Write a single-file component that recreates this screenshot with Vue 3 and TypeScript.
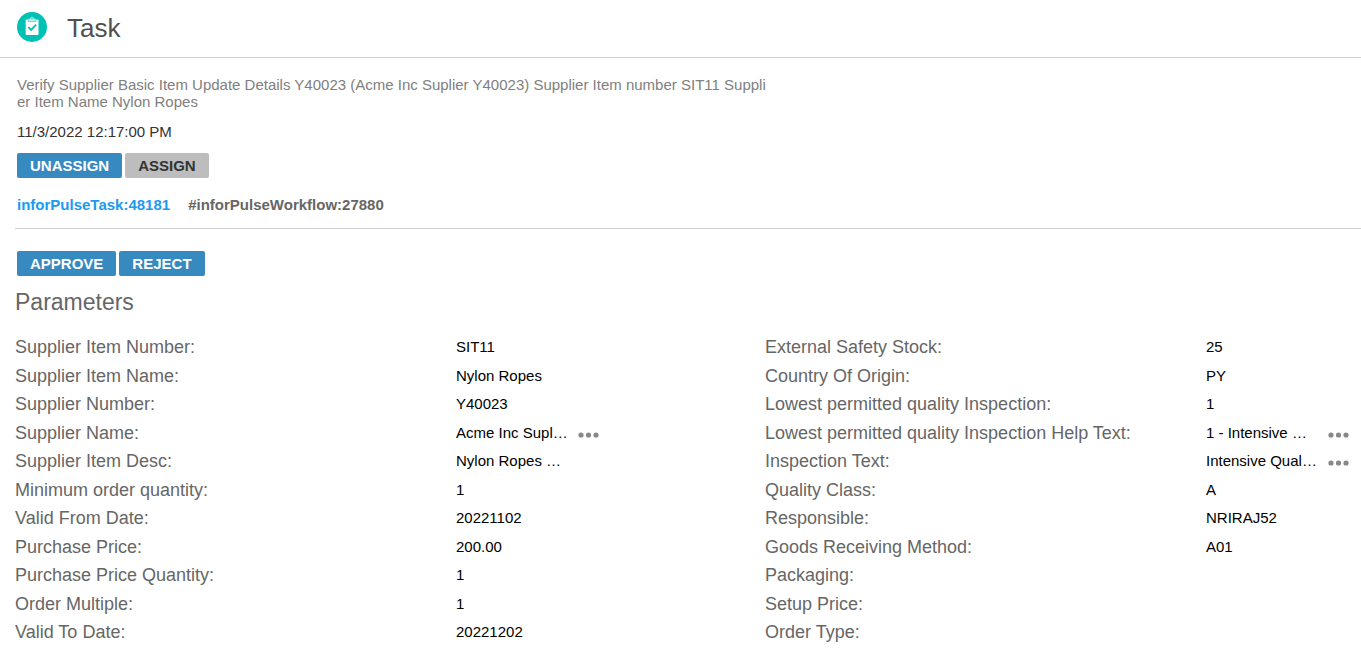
<script setup lang="ts">
interface Parameter {
  label: string
  value: string
  more?: boolean
}

const columns: Parameter[][] = [
  [
    { label: 'Supplier Item Number:', value: 'SIT11' },
    { label: 'Supplier Item Name:', value: 'Nylon Ropes' },
    { label: 'Supplier Number:', value: 'Y40023' },
    { label: 'Supplier Name:', value: 'Acme Inc Supl…', more: true },
    { label: 'Supplier Item Desc:', value: 'Nylon Ropes …' },
    { label: 'Minimum order quantity:', value: '1' },
    { label: 'Valid From Date:', value: '20221102' },
    { label: 'Purchase Price:', value: '200.00' },
    { label: 'Purchase Price Quantity:', value: '1' },
    { label: 'Order Multiple:', value: '1' },
    { label: 'Valid To Date:', value: '20221202' },
  ],
  [
    { label: 'External Safety Stock:', value: '25' },
    { label: 'Country Of Origin:', value: 'PY' },
    { label: 'Lowest permitted quality Inspection:', value: '1' },
    { label: 'Lowest permitted quality Inspection Help Text:', value: '1 - Intensive …', more: true },
    { label: 'Inspection Text:', value: 'Intensive Qual…', more: true },
    { label: 'Quality Class:', value: 'A' },
    { label: 'Responsible:', value: 'NRIRAJ52' },
    { label: 'Goods Receiving Method:', value: 'A01' },
    { label: 'Packaging:', value: '' },
    { label: 'Setup Price:', value: '' },
    { label: 'Order Type:', value: '' },
  ],
]
</script>

<template>
  <div class="page">
    <header class="header">
      <svg class="logo" viewBox="0 0 30 30" aria-hidden="true">
        <circle cx="15" cy="15" r="15" fill="#00c2b4" />
        <rect x="8.7" y="7.5" width="12.8" height="15.5" rx=".8" fill="#fff" />
        <path d="M11 9.6V7.4q0-.8.8-.8h1a2.3 2.3 0 0 1 4.5 0h1q.8 0 .8.8v2.2z" fill="#b5ece8" stroke="#00c2b4" stroke-width=".5" />
        <circle cx="15" cy="6.6" r=".7" fill="#00c2b4" />
        <path d="M11.4 15.2l2.8 2.7 4.9-5.2" fill="none" stroke="#00c2b4" stroke-width="1.8" />
      </svg>
      <h1 class="title">Task</h1>
    </header>

    <main class="content">
      <section class="summary">
        <p class="description">Verify Supplier Basic Item Update Details Y40023 (Acme Inc Suplier Y40023) Supplier Item number SIT11 Supplier Item Name Nylon Ropes</p>
        <p class="date">11/3/2022 12:17:00 PM</p>
        <div class="actions">
          <button type="button" class="button">UNASSIGN</button>
          <button type="button" class="button muted">ASSIGN</button>
        </div>
        <div class="tags">
          <a href="#task" class="task">inforPulseTask:48181</a>
          <span>#inforPulseWorkflow:27880</span>
        </div>
      </section>

      <div class="actions decisions">
        <button type="button" class="button">APPROVE</button>
        <button type="button" class="button">REJECT</button>
      </div>

      <h2 class="subtitle">Parameters</h2>
      <div class="parameters">
        <dl v-for="(items, i) in columns" :key="i" class="list">
          <div v-for="item in items" :key="item.label" class="row">
            <dt>{{ item.label }}</dt>
            <dd>
              <span class="value">{{ item.value }}</span>
              <button v-if="item.more" type="button" class="more" :aria-label="`Show full ${item.label}`">
                <svg width="22" height="6" viewBox="0 0 22 6" aria-hidden="true">
                  <circle cx="3" cy="3" r="2.6" />
                  <circle cx="10.5" cy="3" r="2.6" />
                  <circle cx="18" cy="3" r="2.6" />
                </svg>
              </button>
            </dd>
          </div>
        </dl>
      </div>
    </main>
  </div>
</template>

<style>
body {
  margin: 0;
  background: #fff;
}
</style>

<style scoped>
.page {
  font-family: "Liberation Sans", Arial, sans-serif;
  font-size: 15px;
  color: #666;
}

.header {
  display: flex;
  align-items: center;
  gap: 20px;
  padding: 11px 17px 12px;
  border-bottom: 1px solid #d0d0d0;
}

.logo {
  width: 30px;
  height: 30px;
  margin-bottom: 2px;
}

.title {
  margin: 0;
  font-size: 26px;
  line-height: 34px;
  font-weight: 400;
  color: #505050;
}

.content {
  padding-left: 15px;
}

.summary {
  padding: 18px 2px 14px;
  border-bottom: 1px solid #d0d0d0;
}

.description {
  max-width: 750px;
  margin: 0;
  line-height: 17px;
  word-break: break-all;
  color: #808080;
}

.date {
  margin: 13px 0 12px;
  line-height: 18px;
  color: #333;
}

.actions {
  display: flex;
  gap: 3px;
}

.button {
  height: 25px;
  padding: 0 13px;
  border: 0;
  border-radius: 2px;
  font: bold 15px/25px "Liberation Sans", Arial, sans-serif;
  color: #fff;
  background: #368ac0;
  cursor: pointer;
}

.button.muted {
  color: #333;
  background: #bdbdbd;
}

.tags {
  display: flex;
  gap: 18px;
  margin-top: 18px;
  font-weight: 700;
  line-height: 18px;
}

.task {
  color: #1a9af0;
  text-decoration: none;
}

.decisions {
  padding: 22px 2px 0;
}

.subtitle {
  margin: 12px 0 17px;
  font-size: 23px;
  line-height: 28px;
  font-weight: 400;
}

.parameters {
  display: grid;
  grid-template-columns: 750fr 596fr;
}

.list {
  margin: 0;
}

.row {
  display: grid;
  grid-template-columns: 441fr 309fr;
  height: 28px;
  line-height: 28px;
}

.list:last-child .row {
  grid-template-columns: 441fr 155fr;
}

.row:nth-child(odd) {
  padding-bottom: 1px;
}

dt {
  font-size: 18px;
  white-space: nowrap;
}

dd {
  display: flex;
  align-items: center;
  margin: 0;
  color: #000;
}

.value {
  width: 122px;
  white-space: nowrap;
}

.more {
  display: flex;
  padding: 4px 0 0;
  border: 0;
  background: none;
  cursor: pointer;
}

.more svg {
  fill: #888;
}
</style>
